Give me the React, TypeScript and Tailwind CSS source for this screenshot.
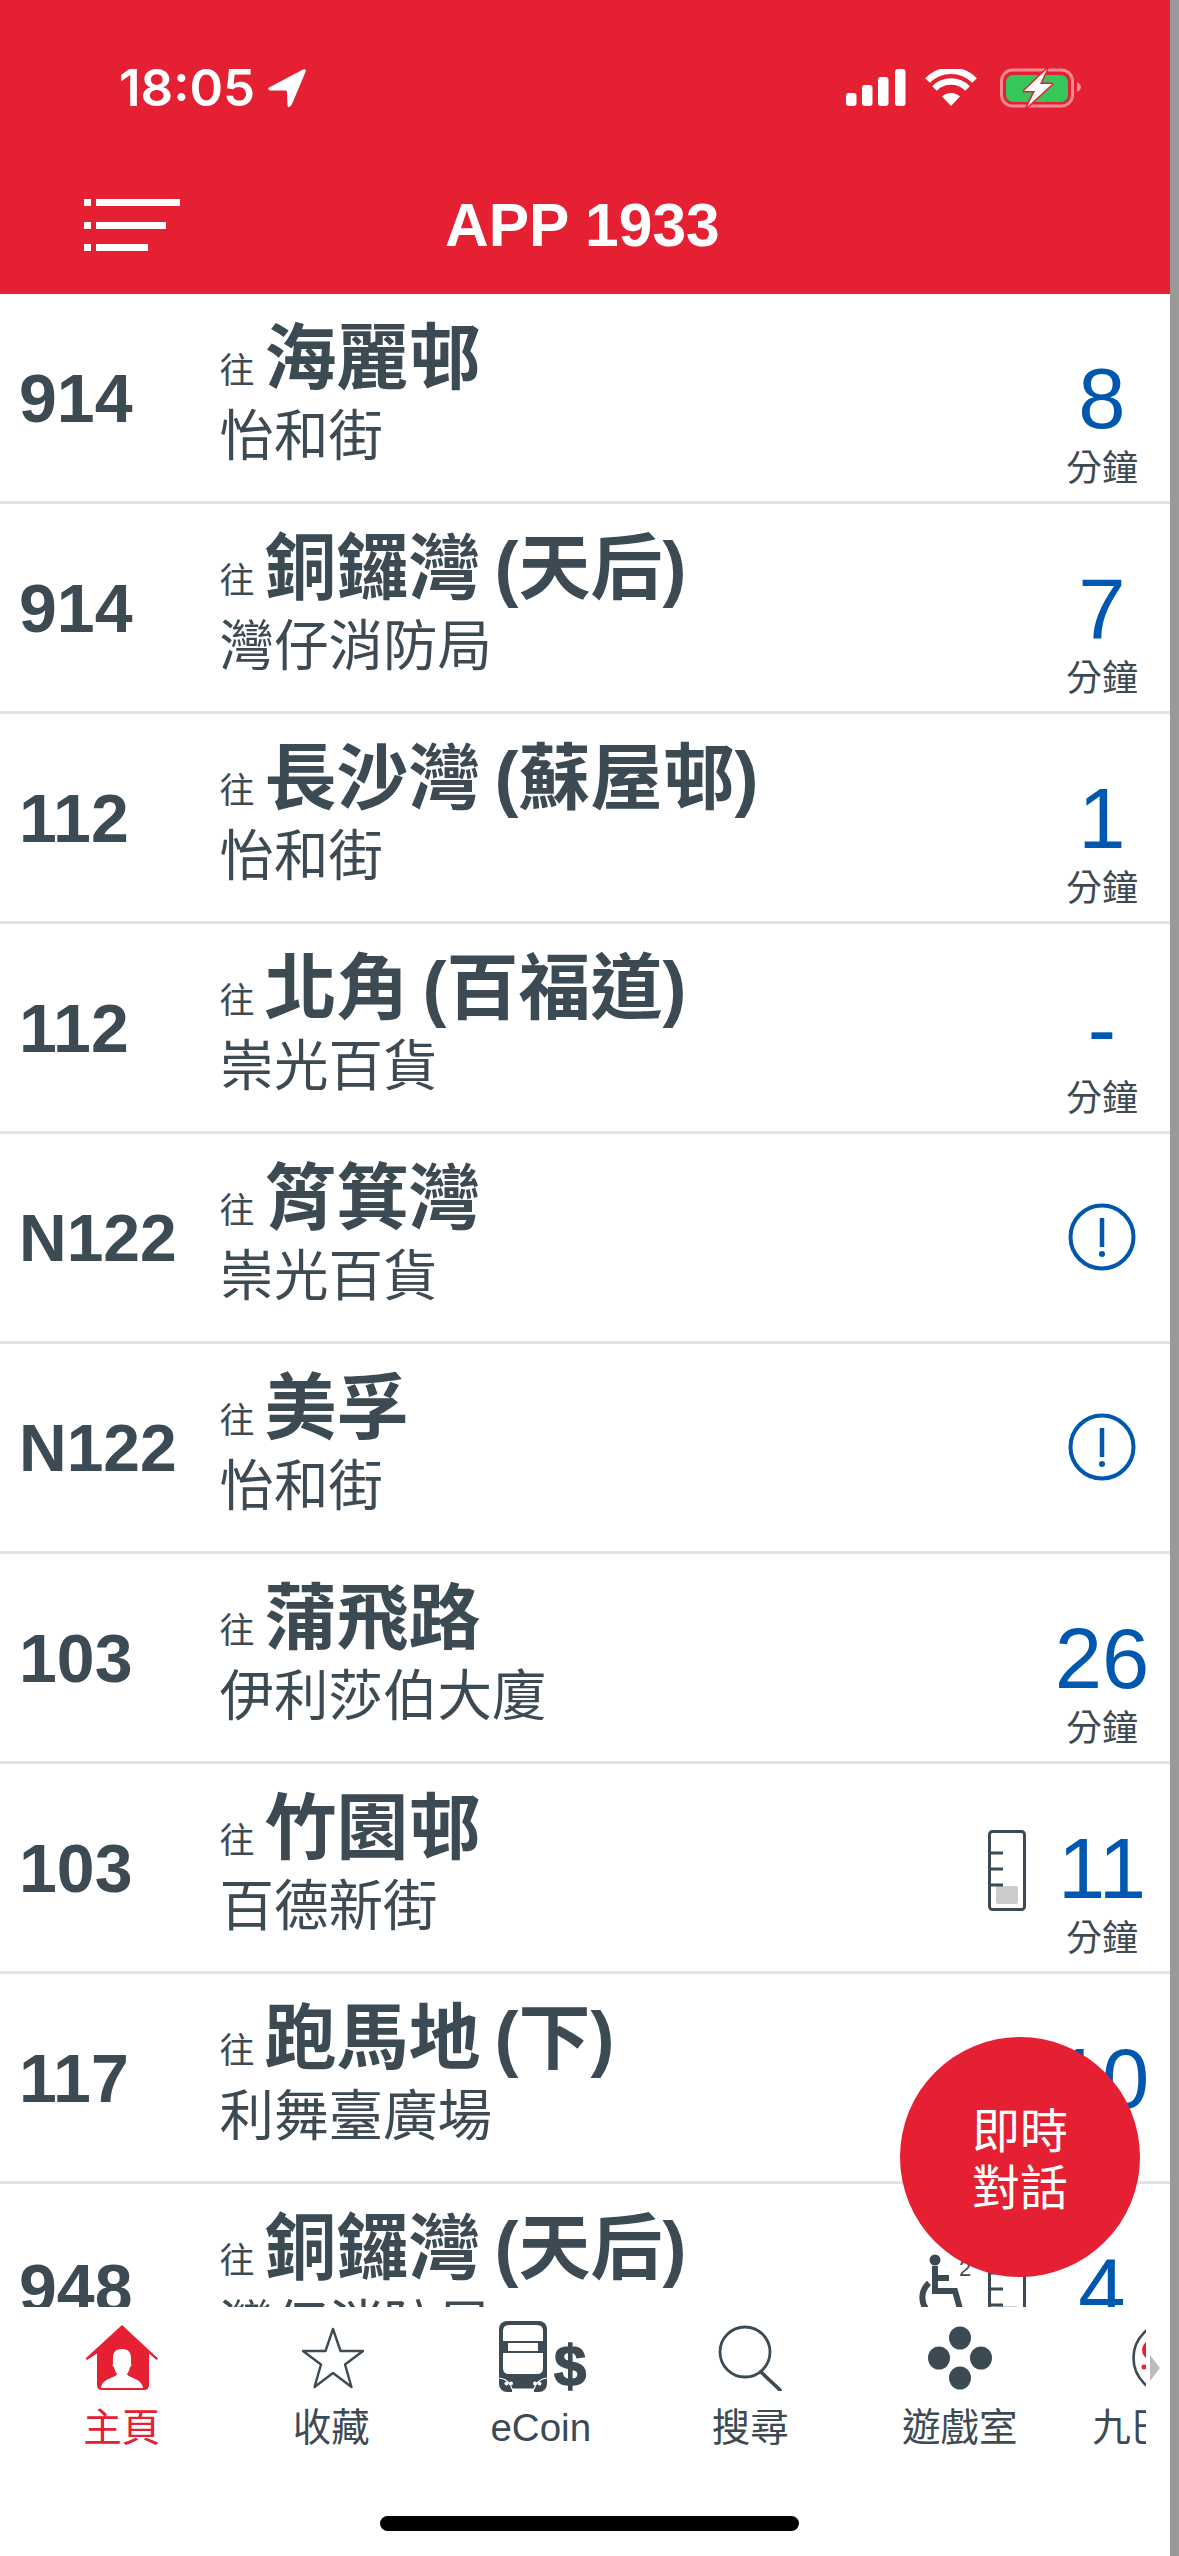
import React from "react";

type Row = {
  route: string;
  title: string;
  sub: string;
  time?: string;
  alert?: boolean;
  load?: boolean;
  wheel?: boolean;
};

const rows: Row[] = [
  { route: "914", title: "海麗邨", sub: "怡和街", time: "8" },
  { route: "914", title: "銅鑼灣 (天后)", sub: "灣仔消防局", time: "7" },
  { route: "112", title: "長沙灣 (蘇屋邨)", sub: "怡和街", time: "1" },
  { route: "112", title: "北角 (百福道)", sub: "崇光百貨", time: "-" },
  { route: "N122", title: "筲箕灣", sub: "崇光百貨", alert: true },
  { route: "N122", title: "美孚", sub: "怡和街", alert: true },
  { route: "103", title: "蒲飛路", sub: "伊利莎伯大廈", time: "26" },
  { route: "103", title: "竹園邨", sub: "百德新街", time: "11", load: true },
  { route: "117", title: "跑馬地 (下)", sub: "利舞臺廣場", time: "10" },
  { route: "948", title: "銅鑼灣 (天后)", sub: "灣仔消防局", time: "4", load: true, wheel: true },
];

const dark = "#3c4a54";

function LoadIcon() {
  return (
    <svg width="38" height="81" viewBox="0 0 38 81" className="mt-[66px] mr-[8px] ml-[12px] shrink-0">
      <rect x="8" y="56" width="22" height="18" rx="2" fill="#cccccc" />
      <rect x="1.5" y="1.5" width="35" height="78" rx="3" fill="none" stroke={dark} strokeWidth="3" />
      <path d="M1 23h14M1 39h14M1 55h14" stroke={dark} strokeWidth="3" fill="none" />
    </svg>
  );
}

function WheelIcon() {
  return (
    <svg width="60" height="80" viewBox="0 0 60 80" className="mt-[70px] shrink-0">
      <circle cx="19" cy="6" r="5.5" fill={dark} />
      <path d="M19 12V37H39L46 62M19 24H33" stroke={dark} strokeWidth="6" fill="none" />
      <path d="M13 29A19 19 0 1 0 38 58" stroke={dark} strokeWidth="6" fill="none" />
      <text x="43" y="22" fontSize="22" fill={dark} fontFamily="Liberation Sans">2</text>
    </svg>
  );
}

function AlertIcon() {
  return (
    <svg width="68" height="68" viewBox="0 0 68 68">
      <circle cx="34" cy="34" r="31.5" fill="none" stroke="#0057b0" strokeWidth="4" />
      <path d="M34 15V44" stroke="#0057b0" strokeWidth="4.5" fill="none" />
      <circle cx="34" cy="51" r="3" fill="#0057b0" />
    </svg>
  );
}

function BusRow({ r }: { r: Row }) {
  return (
    <div className="flex h-[210px] shrink-0 border-b-[3px] border-[#e0e4e4]">
      <div
        className={`flex w-[219.5px] shrink-0 items-center pt-[2px] pl-[19px] font-bold text-[#3c4a54] ${
          r.route.length > 3 ? "text-[66px]" : "text-[68px]"
        }`}
      >
        {r.route}
      </div>
      <div className="flex min-w-0 flex-1 flex-col pt-[28px] text-[#3c4a54]">
        <div className="flex items-baseline whitespace-nowrap">
          <span className="text-[35px] leading-[72px]">往</span>
          <span className="ml-[10px] text-[72px] leading-[72px] font-bold [word-spacing:-6px]">{r.title}</span>
        </div>
        <div className="text-[54.5px] leading-[60px] whitespace-nowrap">{r.sub}</div>
      </div>
      {r.wheel && <WheelIcon />}
      {r.load && <LoadIcon />}
      {r.alert ? (
        <div className="flex w-[136px] shrink-0 items-center justify-center">
          <AlertIcon />
        </div>
      ) : (
        <div className="flex w-[136px] shrink-0 flex-col items-center pt-[62px]">
          <div className="text-[85px] leading-[85px] text-[#0057b0]">{r.time}</div>
          <div className="mt-[8px] text-[36px] leading-[40px] text-[#3c4a54]">分鐘</div>
        </div>
      )}
    </div>
  );
}

function HomeIcon() {
  return (
    <svg width="74" height="66" viewBox="0 0 74 66">
      <path d="M37 0L73 33.5L71.5 35L64 28.5V60Q64 65 59 65H17Q12 65 12 60V28.5L2 35L0.5 33.5Z" fill="#e42032" />
      <path d="M37 24C30 24 28 28 28 33C28 36 28 40 27.5 41L29 42C30 46 31 48 32 49C31 53 17 53 16 63H58C57 53 43 53 42 49C43 48 44 46 45 42L46.5 41C46 40 46 36 46 33C46 28 44 24 37 24Z" fill="#ffffff" />
    </svg>
  );
}

function StarIcon() {
  return (
    <svg width="64" height="64" viewBox="0 0 64 64" className="ml-[3px]">
      <path d="M32 3L39.5 25H62L44 38.5L50.5 61L32 47L13.5 61L20 38.5L2 25H24.5Z" fill="none" stroke={dark} strokeWidth="2.4" strokeLinejoin="round" />
    </svg>
  );
}

function CoinIcon() {
  return (
    <svg width="90" height="74" viewBox="0 0 90 74" className="ml-[6px]">
      <rect x="0" y="0" width="48" height="71" rx="8" fill={dark} />
      <path d="M4 10Q4 4 10 4H38Q44 4 44 10V20H4Z" fill="#ffffff" />
      <rect x="9" y="22" width="30" height="8" fill="#ffffff" />
      <path d="M4 32H44V47Q44 53 38 53H10Q4 53 4 47Z" fill="#ffffff" />
      <path d="M0 57Q10 58 13 68M48 57Q38 58 35 68" stroke="#ffffff" strokeWidth="1.2" fill="none" />
      <rect x="13" y="67.5" width="22" height="4" fill="#ffffff" />
      <circle cx="7.5" cy="62.5" r="2" fill="#ffffff" />
      <circle cx="12" cy="62.5" r="2" fill="#ffffff" />
      <circle cx="36" cy="62.5" r="2" fill="#ffffff" />
      <circle cx="40.5" cy="62.5" r="2" fill="#ffffff" />
      <text x="55" y="65" fontSize="58" fontWeight="700" fill={dark} stroke={dark} strokeWidth="1.5" fontFamily="Liberation Sans">$</text>
    </svg>
  );
}

function SearchIcon() {
  return (
    <svg width="64" height="66" viewBox="0 0 64 66">
      <circle cx="27" cy="27" r="25" fill="none" stroke={dark} strokeWidth="2.8" />
      <path d="M43 47L62 65" stroke={dark} strokeWidth="3.6" strokeLinecap="round" fill="none" />
    </svg>
  );
}

function GameIcon() {
  return (
    <svg width="64" height="64" viewBox="0 0 64 64">
      <ellipse cx="32" cy="12" rx="11" ry="11.5" fill={dark} />
      <ellipse cx="11" cy="32" rx="11" ry="11.5" fill={dark} />
      <ellipse cx="53" cy="32" rx="11" ry="11.5" fill={dark} />
      <ellipse cx="32" cy="52" rx="11" ry="11.5" fill={dark} />
    </svg>
  );
}

function KmbIcon() {
  return (
    <svg width="74" height="74" viewBox="0 0 74 74">
      <circle cx="37" cy="37" r="35.5" fill="none" stroke={dark} strokeWidth="2.6" />
      <circle cx="20" cy="29" r="10" fill="#e42032" />
      <circle cx="12" cy="46" r="2.5" fill="#e42032" />
    </svg>
  );
}

const tabs: { label: string; icon: React.ReactNode; active?: boolean }[] = [
  { label: "主頁", icon: <HomeIcon />, active: true },
  { label: "收藏", icon: <StarIcon /> },
  { label: "eCoin", icon: <CoinIcon /> },
  { label: "搜尋", icon: <SearchIcon /> },
  { label: "遊戲室", icon: <GameIcon /> },
  { label: "九巴資訊", icon: <KmbIcon /> },
];

function StatusBar() {
  return (
    <div className="flex h-[40px] items-center pl-[119px] text-white">
      <span className="[font-family:Inter] text-[51px] leading-[40px] font-semibold">18:05</span>
      <svg width="38" height="39" viewBox="0 0 38 39" className="ml-[13px]">
        <path d="M35 0.5Q38.5 -0.5 37.5 3L24 35Q21 40 19.5 37L19 23Q19 21.5 17.5 21.5L2 21.5Q-1 20.5 1 18.5Z" fill="#ffffff" />
      </svg>
      <svg width="60" height="38" viewBox="0 0 60 38" className="ml-[540px]">
        <rect x="0" y="24" width="10.5" height="13" rx="3" fill="#ffffff" />
        <rect x="16" y="16" width="10.5" height="21" rx="3" fill="#ffffff" />
        <rect x="32" y="8" width="10.5" height="29" rx="3" fill="#ffffff" />
        <rect x="49" y="0" width="10.5" height="37" rx="3" fill="#ffffff" />
      </svg>
      <svg width="52" height="38" viewBox="0 0 52 38" className="ml-[19px]">
        <path d="M26 37L17 27.5A13 13 0 0 1 35 27.5Z" fill="#ffffff" />
        <path d="M9.5 19.5A23 23 0 0 1 42.5 19.5" stroke="#ffffff" strokeWidth="6.5" fill="none" />
        <path d="M2.5 11.5A33 33 0 0 1 49.5 11.5" stroke="#ffffff" strokeWidth="6.5" fill="none" />
      </svg>
      <svg width="82" height="40" viewBox="0 0 82 40" className="ml-[23px]">
        <rect x="1.5" y="2" width="71" height="36" rx="11" fill="none" stroke="#f58a95" strokeWidth="3" />
        <rect x="6" y="7" width="62" height="27" rx="7" fill="#35c759" />
        <path d="M77 14Q81 16 81 19Q81 22 77 24Z" fill="#f58a95" />
        <path d="M47 1L24 23H35L27 39L52 16H40Z" fill="#ffffff" stroke="#e42032" strokeWidth="3" strokeLinejoin="round" paintOrder="stroke" />
      </svg>
    </div>
  );
}

export default function App() {
  return (
    <div className="relative flex h-[2556px] w-[1179px] flex-col overflow-hidden bg-white [font-family:'Liberation_Sans','Noto_Sans_CJK_TC',sans-serif]">
      <header className="flex h-[293.5px] shrink-0 flex-col bg-[#e42032] pt-[68px] pr-[9px]">
        <StatusBar />
        <div className="mt-[87px] flex items-center pl-[84px] text-white">
          <svg width="96" height="52" viewBox="0 0 96 52">
            <g fill="#ffffff">
              <rect x="0" y="0" width="7" height="7" />
              <rect x="12" y="0" width="84" height="7" />
              <rect x="0" y="23" width="7" height="7" />
              <rect x="12" y="23" width="70" height="7" />
              <rect x="0" y="45" width="7" height="7" />
              <rect x="12" y="45" width="52" height="7" />
            </g>
          </svg>
          <span className="ml-[265px] text-[60.5px] leading-[60px] font-bold">APP 1933</span>
        </div>
      </header>

      <main className="flex min-h-0 flex-1 flex-col overflow-hidden pr-[9px]">
        {rows.map((r, i) => (
          <BusRow key={i} r={r} />
        ))}
      </main>

      <nav className="relative h-[249px] shrink-0 pr-[9px]">
        <div className="flex w-[1146px] overflow-hidden pt-[15px] pl-[17px]">
          {tabs.map((t) => (
            <div key={t.label} className="flex w-[209.5px] shrink-0 flex-col items-center">
              <div className="flex h-[72px] items-center justify-center">{t.icon}</div>
              <div className={`mt-[12px] text-[38.5px] leading-[44px] whitespace-nowrap ${t.active ? "text-[#e42032]" : "text-[#3c4a54]"}`}>
                {t.label}
              </div>
            </div>
          ))}
        </div>
        <div className="absolute top-[48px] left-[1150px] h-0 w-0 border-y-[13.5px] border-l-[10px] border-y-transparent border-l-[#bbbbbb]" />
        <div className="mt-[66px] ml-[380px] h-[15px] w-[419px] rounded-full bg-black" />
      </nav>

      <div className="absolute top-[2037px] left-[900px] flex h-[240px] w-[240px] items-center justify-center rounded-full bg-[#e42032] pt-[6px] text-center text-[48px] leading-[57px] text-white">
        即時
        <br />
        對話
      </div>
      <div className="absolute inset-y-0 right-0 w-[9px] bg-[#999999]" />
    </div>
  );
}
